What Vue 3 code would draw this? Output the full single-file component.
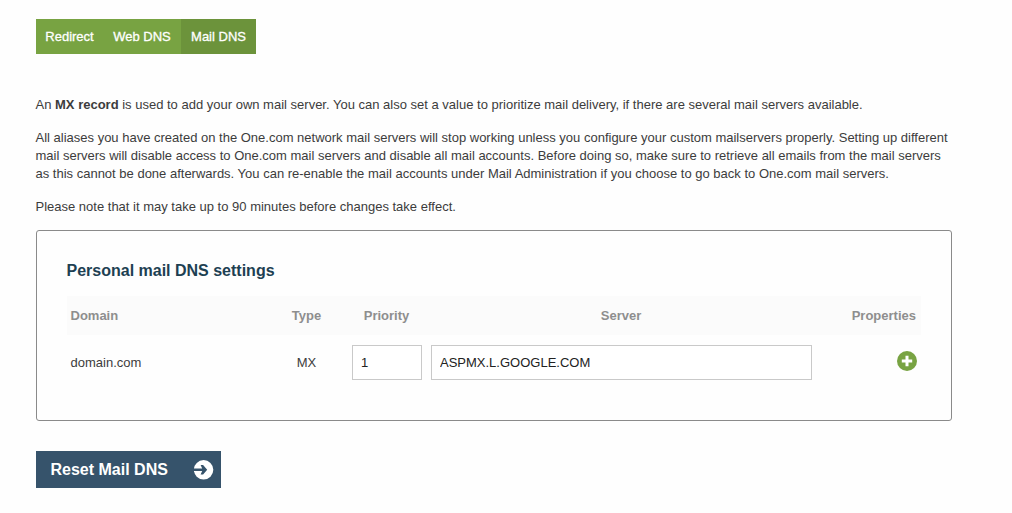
<script setup>
import { ref } from 'vue'

const tabs = ['Redirect', 'Web DNS', 'Mail DNS']
const active = ref('Mail DNS')
const priority = ref('1')
const server = ref('ASPMX.L.GOOGLE.COM')
</script>

<template>
  <main class="page">
    <nav class="tabs">
      <button
        v-for="tab in tabs"
        :key="tab"
        class="tab"
        :class="{ active: tab === active }"
        @click="active = tab"
      >{{ tab }}</button>
    </nav>

    <section class="intro">
      <p>An <strong>MX record</strong> is used to add your own mail server. You can also set a value to prioritize mail delivery, if there are several mail servers available.</p>
      <p>
        <span class="line">All aliases you have created on the One.com network mail servers will stop working unless you configure your custom mailservers properly. Setting up different</span>
        <span class="line">mail servers will disable access to One.com mail servers and disable all mail accounts. Before doing so, make sure to retrieve all emails from the mail servers</span>
        <span class="line">as this cannot be done afterwards. You can re-enable the mail accounts under Mail Administration if you choose to go back to One.com mail servers.</span>
      </p>
      <p class="last">Please note that it may take up to 90 minutes before changes take effect.</p>
    </section>

    <section class="card">
      <h2>Personal mail DNS settings</h2>
      <div class="row head">
        <span class="domain">Domain</span>
        <span class="center type">Type</span>
        <span class="center">Priority</span>
        <span class="center">Server</span>
        <span class="right">Properties</span>
      </div>
      <div class="row record">
        <span class="domain">domain.com</span>
        <span class="center type">MX</span>
        <input v-model="priority" class="priority" aria-label="Priority" />
        <input v-model="server" class="server" aria-label="Server" />
        <button class="add" aria-label="Add record">
          <svg width="20" height="20" viewBox="0 0 20 20">
            <circle cx="10" cy="10" r="10" fill="#78a342" />
            <path d="M10 4.8v10.4M4.8 10h10.4" stroke="#fff" stroke-width="3" />
          </svg>
        </button>
      </div>
    </section>

    <button class="reset">
      <span>Reset Mail DNS</span>
      <svg width="20" height="20" viewBox="0 0 20 20">
        <circle cx="9.6" cy="9.8" r="9.7" fill="#fff" />
        <path d="M0 8.5h8.2L6.6 5h2.5l4.1 4.8-4.1 4.8H6.6l1.6-3.5H0z" fill="#36536b" />
      </svg>
    </button>
  </main>
</template>

<style>
html,
body {
  background: #fefefe;
}
</style>

<style scoped>
.page {
  box-sizing: border-box;
  width: 1012px;
  height: 513px;
  padding: 19px 60px 0 36px;
  font-family: "Liberation Sans", Arial, sans-serif;
  font-size: 13px;
  line-height: 18px;
  color: #3c3c3c;
  overflow: hidden;
}
button,
input {
  font: inherit;
  border-radius: 0;
  margin: 0;
}
button {
  border: 0;
  padding: 0;
}
.tabs {
  display: grid;
  grid-template-columns: 68px 77px 75px;
  width: 220px;
  height: 35px;
}
.tab {
  background: #78a342;
  color: #fff;
  white-space: nowrap;
  padding-right: 1px;
  -webkit-text-stroke: 0.3px currentColor;
}
.tab.active {
  background: #6c933b;
  padding-right: 0;
}
.intro {
  padding-top: 42px;
  margin-left: -0.5px;
}
p {
  margin: 0 0 15px;
  white-space: nowrap;
}
.last {
  margin-bottom: 14px;
}
.line {
  display: block;
}
.card {
  box-sizing: border-box;
  width: 916px;
  height: 191px;
  border: 1px solid #8a8a8a;
  border-radius: 3px;
  padding: 29px 30px 0;
}
h2 {
  margin: 0 0 0 -0.5px;
  height: 36px;
  font-size: 16px;
  line-height: 22px;
  color: #1d4052;
  white-space: nowrap;
}
.row {
  display: grid;
  align-items: center;
}
.head {
  grid-template-columns: 204px 72px 87px 382px 105px;
  height: 39px;
  padding-right: 4px;
  background: #fbfbfb;
  color: #8e8e8e;
  font-weight: bold;
}
.record {
  grid-template-columns: 204px 72px 9px 70px 9px 381px 105px;
  height: 55px;
}
.record .priority {
  grid-column: 4;
}
.record .server {
  grid-column: 6;
}
.domain {
  padding-left: 3.5px;
}
.center {
  text-align: center;
}
.type {
  padding-right: 1px;
}
.right {
  text-align: right;
  padding-right: 1px;
}
input {
  box-sizing: border-box;
  width: 100%;
  height: 35px;
  border: 1px solid #c9c9c9;
  padding: 0 8px;
  background: #fff;
  color: #222;
  outline: 0;
}
.add {
  width: 20px;
  height: 20px;
  justify-self: end;
  background: none;
  margin-bottom: 3px;
}
.add svg,
.reset svg {
  display: block;
}
.reset {
  display: flex;
  align-items: center;
  justify-content: space-between;
  box-sizing: border-box;
  width: 185px;
  height: 37px;
  margin-top: 30px;
  padding: 0 7px 0 14.5px;
  background: #36536b;
  color: #fff;
  font-size: 16px;
  font-weight: bold;
}
</style>
